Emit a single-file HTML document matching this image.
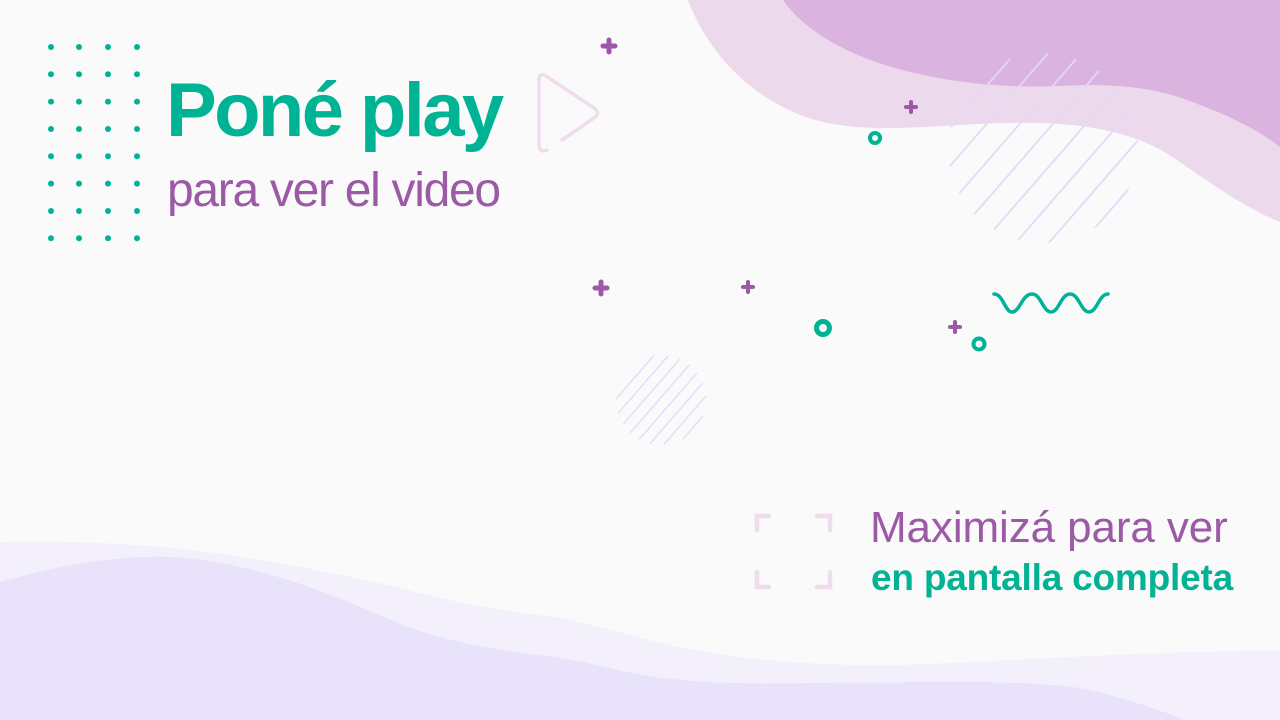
<!DOCTYPE html>
<html><head><meta charset="utf-8"><style>
html,body{margin:0;padding:0;width:1280px;height:720px;overflow:hidden;background:#fafafa;font-family:"Liberation Sans",sans-serif}
.t{position:absolute;white-space:nowrap;margin:0}
</style></head><body>
<svg width="1280" height="720" style="position:absolute;left:0;top:0">
<defs>
<pattern id="h1" width="25" height="25" patternUnits="userSpaceOnUse" patternTransform="rotate(41)"><line x1="0" y1="0" x2="0" y2="25" stroke="#e1d8fa" stroke-width="3.5"/></pattern>
<pattern id="h2" width="11" height="11" patternUnits="userSpaceOnUse" patternTransform="rotate(41)"><line x1="0" y1="0" x2="0" y2="11" stroke="#e1d8fa" stroke-width="2.5"/></pattern>
</defs>
<path d="M688,0 C705,45 740,90 800,115 C840,130 880,130 960,125 C1040,120 1120,120 1177,160 C1220,190 1250,210 1280,222 L1280,0 Z" fill="#ecd9ec"/>
<path d="M783,0 C800,25 840,55 910,72 C960,84 1010,88 1060,86 C1120,83 1160,88 1200,105 C1240,120 1265,135 1280,147 L1280,0 Z" fill="#dab3df"/>
<circle cx="1043" cy="148" r="95" fill="url(#h1)"/>
<circle cx="661" cy="400" r="45" fill="url(#h2)"/>
<path d="M0,542 C90,540 170,546 237,556 C300,566 360,578 408,590 C460,604 510,612 555,617 C610,628 650,642 694,650 C760,662 830,666 898,665 C1000,662 1150,650 1280,651 L1280,720 L0,720 Z" fill="#f3f0fb"/>
<path d="M0,582 C60,565 120,555 171,557 C260,562 340,598 408,627 C460,645 510,652 555,657 C600,664 620,672 653,677 C710,684 760,684 816,683 C900,682 940,682 980,682 C1040,683 1080,686 1102,693 C1140,703 1165,712 1184,720 L0,720 Z" fill="#e8e2fb"/>
<g fill="#00b394">
<g id="dr"><circle cx="51" cy="47" r="3"/><circle cx="79" cy="47" r="3"/><circle cx="108" cy="47" r="3"/><circle cx="137" cy="47" r="3"/></g>
<use href="#dr" y="27.3"/><use href="#dr" y="54.6"/><use href="#dr" y="82"/><use href="#dr" y="109.3"/><use href="#dr" y="136.6"/><use href="#dr" y="164"/><use href="#dr" y="191.3"/>
</g>
<path d="M539,80 Q539,72 546,76 L594,108 Q601,113 594,118 L562,140" fill="none" stroke="#efdcef" stroke-width="3.5" stroke-linecap="round"/>
<path d="M539,80 L539,146 Q540,153 547,150" fill="none" stroke="#efdcef" stroke-width="3.5" stroke-linecap="round"/>
<g stroke="#9b59a6" stroke-linecap="round">
<path d="M603,46h12M609,40v12" stroke-width="5"/>
<path d="M906,107h10M911,102v10" stroke-width="4"/>
<path d="M595,288h12M601,282v12" stroke-width="5"/>
<path d="M743,287h10M748,282v10" stroke-width="4"/>
<path d="M950,327h10M955,322v10" stroke-width="4"/>
</g>
<g fill="none" stroke="#00b394">
<circle cx="875" cy="138" r="5" stroke-width="4"/>
<circle cx="823" cy="328" r="6.5" stroke-width="5"/>
<circle cx="979" cy="344" r="5.5" stroke-width="4"/>
<path d="M994,294 C1003,294 1005,312 1012,312 C1020,312 1022,294 1032,294 C1041,294 1043,312 1051,312 C1059,312 1061,294 1070,294 C1079,294 1081,312 1089,312 C1097,312 1099,294 1108,294" stroke-width="3.5" stroke-linecap="round"/>
</g>
<g fill="none" stroke="#efdcef" stroke-width="4.5" stroke-linecap="round">
<path d="M757,530v-14h12M817,516h13v14M757,572v15h12M817,587h13v-15"/>
</g>
</svg>
<div class="t" style="left:166px;top:68px;font-size:76px;font-weight:bold;color:#00b394;letter-spacing:-2.6px;line-height:86px">Poné play</div>
<div class="t" style="left:167px;top:164px;font-size:48px;color:#9b59a6;letter-spacing:-1.3px;line-height:54px">para ver el video</div>
<div class="t" style="left:870px;top:503px;font-size:44px;color:#9b59a6;letter-spacing:-0.1px;line-height:50px">Maximizá para ver</div>
<div class="t" style="left:871px;top:557px;font-size:37px;font-weight:bold;color:#00b394;letter-spacing:-0.2px;line-height:42px">en pantalla completa</div>
</body></html>
